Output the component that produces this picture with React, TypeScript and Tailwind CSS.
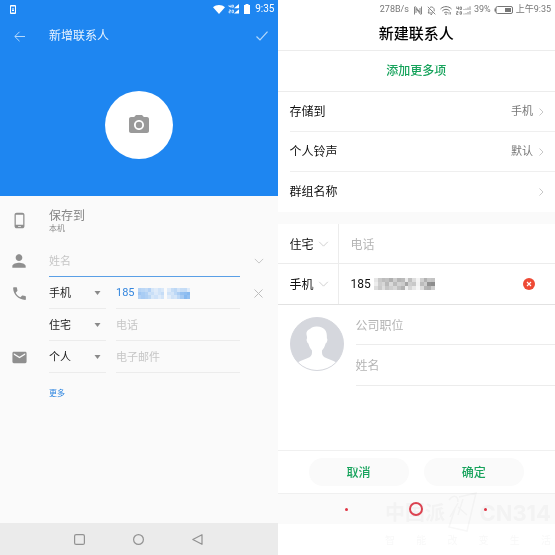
import type { ReactNode } from 'react';
import { MdCameraAlt, MdEmail, MdPerson, MdPhone, MdPhoneAndroid } from 'react-icons/md';

const LABEL_ROWS = [
  { label: '存储到', value: '手机' },
  { label: '个人铃声', value: '默认' },
  { label: '群组名称', value: '' },
];

const BLUE_MOSAIC = [
  ['#b5d3f5', '#bbd7f6', '#c3dbf6', '#b3d1f5', '#d5e6f8', '#dfebf9', '#d0e3f8', '#d9e8f9', '', '#dfebf9', '#c6ddf6', '#bdd8f5', '#d3e4f8', '#c6ddf6', '#c4dcf6', '#dfebf9'],
  ['#9fc6f3', '#a9cdf4', '#b3d2f5', '#cde1f7', '#c9dff7', '#dce9f9', '#d0e3f8', '#c5dcf6', '', '#d0e3f8', '#d4e5f8', '#bdd8f6', '#abcdf3', '#95c1f1', '#8fbef1', '#86b9f0'],
  ['#b4d2f5', '#a9ccf4', '#b0d0f4', '#bbd7f5', '#d7e7f8', '#cfe2f8', '#dfebf9', '#d2e4f8', '', '#e2edfa', '#cfe2f7', '#d4e5f8', '#bdd8f6', '#a5caf3', '#86b9f0', '#93c0f1'],
];

const GRAY_MOSAIC = [
  ['#e6e6e6', '#c9c9c9', '#bdbdbd', '#c2c2c2', '#b0b0b0', '#cecece', '#b5b5b5', '#bbbbbb', '#eaeaea', '#c0c0c0', '#dedede', '#f4f4f4', '#d0d0d0', '#b2b2b2', '#c8c8c8', '#c4c4c4'],
  ['#ededed', '#cecece', '#d7d7d7', '#b9b9b9', '#dadada', '#bcbcbc', '#d2d2d2', '#cccccc', '#a6a6a6', '#cecece', '#c8c8c8', '#f2f2f2', '#bcbcbc', '#cccccc', '#919191', '#8c8c8c'],
  ['#dddddd', '#cacaca', '#dedede', '#c6c6c6', '#cfcfcf', '#d8d8d8', '#c1c1c1', '#b3b3b3', '#f0f0f0', '#d6d6d6', '#e8e8e8', '#f6f6f6', '#dcdcdc', '#b5b5b5', '#b0b0b0', '#cdcdcd'],
];

function Mosaic({ cells, className }: { cells: string[][]; className: string }) {
  return (
    <svg viewBox="0 0 16 3" preserveAspectRatio="none" className={className} shapeRendering="crispEdges" aria-hidden="true">
      {cells.map((row, y) =>
        row.map((fill, x) => fill && <rect key={`${x}-${y}`} x={x} y={y} width="1" height="1" fill={fill} />),
      )}
    </svg>
  );
}

function Chevron({ className, d = 'M1 1l5 5 5-5', box = '0 0 12 7' }: { className: string; d?: string; box?: string }) {
  return (
    <svg viewBox={box} className={className} fill="none" stroke="currentColor" aria-hidden="true">
      <path d={d} />
    </svg>
  );
}

function BlueStatusBar() {
  return (
    <div className="flex h-[18px] items-center justify-between pl-[10px] pr-[3px] text-white">
      <svg viewBox="0 0 6 9" className="h-[9px] w-[6px]" fill="none" stroke="currentColor" aria-hidden="true">
        <rect x=".5" y=".5" width="5" height="8" rx=".5" />
        <path d="M0 1h6M0 8h6M3 3v3M2 5l1 1 1-1" />
      </svg>
      <div className="flex items-center">
        <svg viewBox="0 0 12 9" className="h-[9px] w-3" fill="currentColor" aria-hidden="true">
          <path d="M0 2.2C3.4-.6 8.6-.6 12 2.2L6 9z" />
        </svg>
        <svg viewBox="0 0 12 10" className="ml-[3px] h-[10px] w-3" fill="currentColor" aria-hidden="true">
          <path d="M6 4.3L11 0v4.3zM6 9.6L11 5.3v4.3z" />
          <path d="M1 1v1.5h2M3 .8v3M4 1.2h1.5v2H4zM1 6h1.5v1.3H1v1.5h1.5M4 6.2h1.5v2.5H4z" fill="none" stroke="currentColor" strokeWidth=".7" />
        </svg>
        <svg viewBox="0 0 6 10" className="ml-1 h-[10px] w-[6px]" fill="currentColor" aria-hidden="true">
          <path d="M1.5 0h3v1H6v9H0V1h1.5z" />
        </svg>
        <span className="ml-[5px] text-[10px] leading-[12px]">9:35</span>
      </div>
    </div>
  );
}

function FormRow({ icon, children, action }: { icon?: ReactNode; children: ReactNode; action?: ReactNode }) {
  return (
    <div className="grid grid-cols-[38px_1fr_38px] items-stretch">
      <div className="flex items-center justify-center text-[#8f8f8f]">{icon}</div>
      <div className="ml-[11px] flex min-w-0 gap-[10px]">{children}</div>
      <div className="flex items-center justify-center text-[#bdbdbd]">{action}</div>
    </div>
  );
}

function TypeSelect({ value, label }: { value: string; label: string }) {
  return (
    <div className="relative h-8 w-[57px] shrink-0 border-b border-[#ececec]">
      <select aria-label={label} defaultValue={value} className="h-full w-full appearance-none bg-transparent pt-1 text-[11px] text-[#222]">
        <option>{value}</option>
      </select>
      <svg viewBox="0 0 6 4" className="pointer-events-none absolute right-[5px] top-[14px] h-1 w-[7px]" aria-hidden="true">
        <path d="M0 0h6L3 4z" fill="#8a8a8a" />
      </svg>
    </div>
  );
}

function BlueContact() {
  return (
    <section className="flex min-h-screen flex-col bg-[#fafafa]">
      <header className="h-[196px] bg-[#1e86f1]">
        <BlueStatusBar />
        <div className="flex h-9 items-center pl-[14px] pr-[10px]">
          <button type="button" aria-label="返回" className="text-[#b4d8fb]">
            <svg viewBox="0 0 11 11" className="h-[11px] w-[11px]" fill="none" stroke="currentColor" aria-hidden="true">
              <path d="M11 5.5H1M5.5 .8L.8 5.5l4.7 4.7" />
            </svg>
          </button>
          <h1 className="ml-6 flex-1 text-[12px] text-[#e8f3fe]">新增联系人</h1>
          <button type="button" aria-label="保存" className="text-[#b4d8fb]">
            <svg viewBox="0 0 12 10" className="h-[10px] w-3" fill="none" stroke="currentColor" strokeWidth="1.2" aria-hidden="true">
              <path d="M.5 5.5L4 9 11.5.6" />
            </svg>
          </button>
        </div>
        <button
          type="button"
          aria-label="添加照片"
          className="mx-auto mt-[37px] flex h-[68px] w-[68px] items-center justify-center rounded-full bg-white text-[#9a9a9a]"
        >
          <MdCameraAlt size={24} aria-hidden="true" />
        </button>
      </header>

      <form className="flex-1">
        <FormRow icon={<MdPhoneAndroid size={17} aria-hidden="true" />}>
          <div className="flex h-12 flex-col justify-center pt-px">
            <div className="text-[12px] leading-4 text-[#858585]">保存到</div>
            <div className="text-[8px] leading-[10px] text-[#8a8a8a]">本机</div>
          </div>
        </FormRow>
        <FormRow
          icon={<MdPerson size={20} aria-hidden="true" />}
          action={
            <button type="button" aria-label="展开">
              <Chevron className="h-[6px] w-[10px]" />
            </button>
          }
        >
          <input
            aria-label="姓名"
            placeholder="姓名"
            className="h-[33px] w-full border-b border-[#5a9fe6] bg-transparent pt-0.5 text-[11px] outline-none placeholder:text-[#c6c6c6]"
          />
        </FormRow>
        <FormRow
          icon={<MdPhone size={17} aria-hidden="true" />}
          action={
            <button type="button" aria-label="删除">
              <svg viewBox="0 0 9 9" className="h-[9px] w-[9px]" fill="none" stroke="currentColor" aria-hidden="true">
                <path d="M.5 .5l8 8M8.5 .5l-8 8" />
              </svg>
            </button>
          }
        >
          <TypeSelect value="手机" label="电话类型" />
          <div className="flex h-8 flex-1 items-center border-b border-[#ececec] pt-0.5">
            <input aria-label="电话号码" defaultValue="185" className="w-[22px] bg-transparent text-[11px] text-[#3486de] outline-none" />
            <Mosaic cells={BLUE_MOSAIC} className="h-[11px] w-[52px]" />
          </div>
        </FormRow>
        <FormRow>
          <TypeSelect value="住宅" label="电话类型" />
          <input
            aria-label="电话"
            placeholder="电话"
            className="h-8 min-w-0 flex-1 border-b border-[#ececec] bg-transparent pt-0.5 text-[11px] outline-none placeholder:text-[#c6c6c6]"
          />
        </FormRow>
        <FormRow icon={<MdEmail size={17} aria-hidden="true" />}>
          <TypeSelect value="个人" label="邮件类型" />
          <input
            aria-label="电子邮件"
            placeholder="电子邮件"
            className="h-8 min-w-0 flex-1 border-b border-[#ececec] bg-transparent pt-0.5 text-[11px] outline-none placeholder:text-[#c6c6c6]"
          />
        </FormRow>
        <FormRow>
          <button type="button" className="h-10 pt-0.5 text-[8px] text-[#2f86e0]">更多</button>
        </FormRow>
      </form>

      <nav className="flex h-8 items-center justify-center gap-12 bg-[#ebebeb] text-[#929292]">
        <button type="button" aria-label="最近任务">
          <svg viewBox="0 0 11 11" className="h-[11px] w-[11px]" fill="none" stroke="currentColor" strokeWidth="1.2" aria-hidden="true">
            <rect x=".6" y=".6" width="9.8" height="9.8" rx="1.5" />
          </svg>
        </button>
        <button type="button" aria-label="主页">
          <svg viewBox="0 0 11 11" className="h-[11px] w-[11px]" fill="none" stroke="currentColor" strokeWidth="1.2" aria-hidden="true">
            <circle cx="5.5" cy="5.5" r="4.9" />
          </svg>
        </button>
        <button type="button" aria-label="后退">
          <svg viewBox="0 0 11 11" className="h-[11px] w-[11px]" fill="none" stroke="currentColor" strokeWidth="1.2" strokeLinejoin="round" aria-hidden="true">
            <path d="M10 .7v9.6L.8 5.5z" />
          </svg>
        </button>
      </nav>
    </section>
  );
}

function WhiteStatusBar() {
  return (
    <div className="flex h-5 items-center justify-end pr-1 text-[9px] text-[#777]">
      <span>278B/s</span>
      <svg viewBox="0 0 8 9" className="ml-[5px] h-[9px] w-2" fill="none" stroke="currentColor" strokeWidth=".9" aria-hidden="true">
        <path d="M.5 8.5V1l1-.3L6 6.500V2M7.500 .5v7.500l-1 .3L2 2.500V7" />
      </svg>
      <svg viewBox="0 0 9 9" className="ml-[5px] h-[9px] w-[9px]" fill="none" stroke="currentColor" strokeWidth=".9" aria-hidden="true">
        <path d="M.8 .8l7.5 7.5M3 1.300c2-1 4.200.3 4.200 2.500v1.500M1.800 3v3L1 7h5M3.500 8.500h1.500" />
      </svg>
      <svg viewBox="0 0 12 9" className="ml-1 h-[9px] w-3" fill="none" stroke="currentColor" aria-hidden="true">
        <path d="M.5 3C3.5-.2 8.5-.2 11.500 3M2.300 5c2-2.200 5.400-2.200 7.400 0M4.200 6.900c1-1.100 2.600-1.100 3.600 0" />
        <circle cx="6" cy="8.2" r=".4" />
        <path d="M9 6v2.500M10.500 6v2.500" strokeWidth=".7" />
      </svg>
      <svg viewBox="0 0 15 9" className="ml-1 h-[9px] w-[15px]" fill="none" stroke="currentColor" strokeWidth=".8" aria-hidden="true">
        <path d="M.7 .5v2h2M2.5 .5v3.300M4 1h1.500v2.500H4zM.5 5.500H2v1.300H.5V8.500H2.200M4 5.700h1.500v2.500H4z" />
        <path d="M8 3v1M10 2.500V4M12 1.500V4M14 .3V4M8 7.500v1M10 7v1.500M12 6v2.500M14 5v3.500" />
      </svg>
      <span className="ml-[3px]">39%</span>
      <svg viewBox="0 0 19 8" className="ml-[3px] h-2 w-[19px]" aria-hidden="true">
        <rect x="2" y=".5" width="16.5" height="7" rx="1.5" fill="none" stroke="currentColor" />
        <path d="M.5 2.5H2v3H.5zM11 2h6v4h-6z" fill="currentColor" />
      </svg>
      <span className="ml-[3px]">上午9:35</span>
    </div>
  );
}

function PhoneTypeSelect({ value }: { value: string }) {
  return (
    <div className="relative w-[61px] shrink-0 border-r border-[#ececec]">
      <select aria-label="电话类型" defaultValue={value} className="h-full w-full appearance-none bg-transparent pl-3 pt-0.5 text-[12px] text-[#111]">
        <option>{value}</option>
      </select>
      <Chevron className="pointer-events-none absolute right-[9px] top-[17px] h-[6px] w-[11px] text-[#c8c8c8]" />
    </div>
  );
}

function WhiteContact() {
  return (
    <section className="flex min-h-screen flex-col bg-white">
      <header className="border-b border-[#ececec]">
        <WhiteStatusBar />
        <h1 className="h-[30px] text-center text-[15px] font-medium leading-7 text-black">新建联系人</h1>
      </header>
      <button type="button" className="h-[41px] w-full border-b border-[#ececec] text-[12px] font-medium text-[#17a35c]">
        添加更多项
      </button>
      <div className="pl-3">
        {LABEL_ROWS.map((row) => (
          <button
            key={row.label}
            type="button"
            className="flex h-10 w-full items-center border-b border-[#efefef] pr-[11px] text-[12px] leading-5 text-[#111] last:border-0"
          >
            <span className="flex-1 text-left">{row.label}</span>
            <span className="mr-[6px] text-[11px] leading-5 text-[#777]">{row.value}</span>
            <Chevron className="h-2 w-[5px] text-[#c8c8c8]" box="0 0 5 8" d="M.5 .5L4 4 .5 7.5" />
          </button>
        ))}
      </div>
      <div className="h-3 bg-[#fafafa]" />

      <form className="flex flex-1 flex-col">
        <div className="flex h-10 border-b border-[#ececec]">
          <PhoneTypeSelect value="住宅" />
          <input aria-label="电话" placeholder="电话" className="min-w-0 flex-1 pl-3 pt-0.5 text-[12px] outline-none placeholder:text-[#b5b5b5]" />
        </div>
        <div className="flex h-[41px] items-stretch border-b border-[#e2e2e2]">
          <PhoneTypeSelect value="手机" />
          <div className="flex flex-1 items-center pl-3 pr-5">
            <input aria-label="手机号码" defaultValue="185" className="w-[23px] text-[12px] text-[#111] outline-none" />
            <Mosaic cells={GRAY_MOSAIC} className="h-3 w-[61px]" />
            <button type="button" aria-label="删除" className="ml-auto">
              <svg viewBox="0 0 12 12" className="h-3 w-3" aria-hidden="true">
                <circle cx="6" cy="6" r="6" fill="#ee4a35" />
                <path d="M4 4l4 4M8 4l-4 4" stroke="#fff" strokeWidth="1.1" />
              </svg>
            </button>
          </div>
        </div>
        <div className="flex">
          <button type="button" aria-label="选择头像" className="ml-3 mt-3 h-[54px] w-[54px] shrink-0">
            <svg viewBox="0 0 54 54" aria-hidden="true">
              <circle cx="27" cy="27" r="26.5" fill="#d5d7dd" />
              <path
                d="M27 9.500c-3.500-.2-5.500 1-7 2.500-1.500.4-3 1.500-3.500 3.500-.4 2 .6 3.300.6 5.500-1 1.300-.5 4.500 1.300 5.500.7 3 2 5.300 3.600 7 .3 3-.2 5.200-2.500 6.700C16 42 11 43 7.700 45.500c5 5 11.500 7.700 19.300 7.700s14.300-2.700 19.300-7.700C43 43 38 42 34.500 40.200c-2.300-1.500-2.800-3.700-2.500-6.700 1.600-1.700 2.900-4 3.600-7 1.800-1 2.300-4.200 1.300-5.500.5-7-2.400-11.200-9.900-11.500z"
                fill="#fff"
              />
              <circle cx="27" cy="27" r="26.5" fill="none" stroke="#d5d7dd" />
            </svg>
          </button>
          <div className="ml-3 flex-1">
            <input
              aria-label="公司职位"
              placeholder="公司职位"
              className="h-10 w-full border-b border-[#ececec] pt-0.5 text-[12px] outline-none placeholder:text-[#b5b5b5]"
            />
            <input
              aria-label="姓名"
              placeholder="姓名"
              className="h-[41px] w-full border-b border-[#ececec] pt-0.5 text-[12px] outline-none placeholder:text-[#b5b5b5]"
            />
          </div>
        </div>
      </form>

      <div className="flex h-[44px] items-center gap-[15px] border-y border-[#f0f0f0] px-[31px] text-[12px] font-medium text-[#17a35c]">
        <button type="button" className="h-7 flex-1 rounded-full bg-[#fafafa] pt-0.5">取消</button>
        <button type="button" className="h-7 flex-1 rounded-full bg-[#fafafa] pt-0.5">确定</button>
      </div>
      <nav className="flex h-[30px] items-center justify-center gap-[61px] bg-[#fafafa]">
        <span className="h-[3px] w-[3px] rounded-full bg-[#e03444]" />
        <button type="button" aria-label="主页" className="h-[14px] w-[14px] rounded-full border-2 border-[#e04452]" />
        <span className="h-[3px] w-[3px] rounded-full bg-[#e03444]" />
      </nav>
      <div className="h-[31px]" />
    </section>
  );
}

function Watermark() {
  return (
    <div className="pointer-events-none absolute bottom-2 right-1 w-[166px] text-[#f8f8f8] mix-blend-multiply">
      <div className="flex items-center justify-between font-bold">
        <span className="text-[20px] leading-7">中国派</span>
        <svg viewBox="0 0 32 44" className="h-11 w-8" fill="none" stroke="currentColor" strokeWidth="1.5" aria-hidden="true">
          <path d="M13 6l17-4-9 38-18-4 6-18M3 9c5-6 9-4 9 2M12 12l-8 14M12 16l9 8M17 8l-5 16" />
        </svg>
        <span className="font-['Inter',sans-serif] text-[22px] leading-7">CN314</span>
      </div>
      <div className="flex justify-between text-[10px] leading-3">
        {['智', '能', '改', '变', '生', '活'].map((c) => (
          <span key={c}>{c}</span>
        ))}
      </div>
    </div>
  );
}

export default function App() {
  return (
    <main className="relative grid min-h-screen grid-cols-2 bg-white font-['Roboto','Noto_Sans_CJK_SC',sans-serif]">
      <BlueContact />
      <WhiteContact />
      <Watermark />
    </main>
  );
}
